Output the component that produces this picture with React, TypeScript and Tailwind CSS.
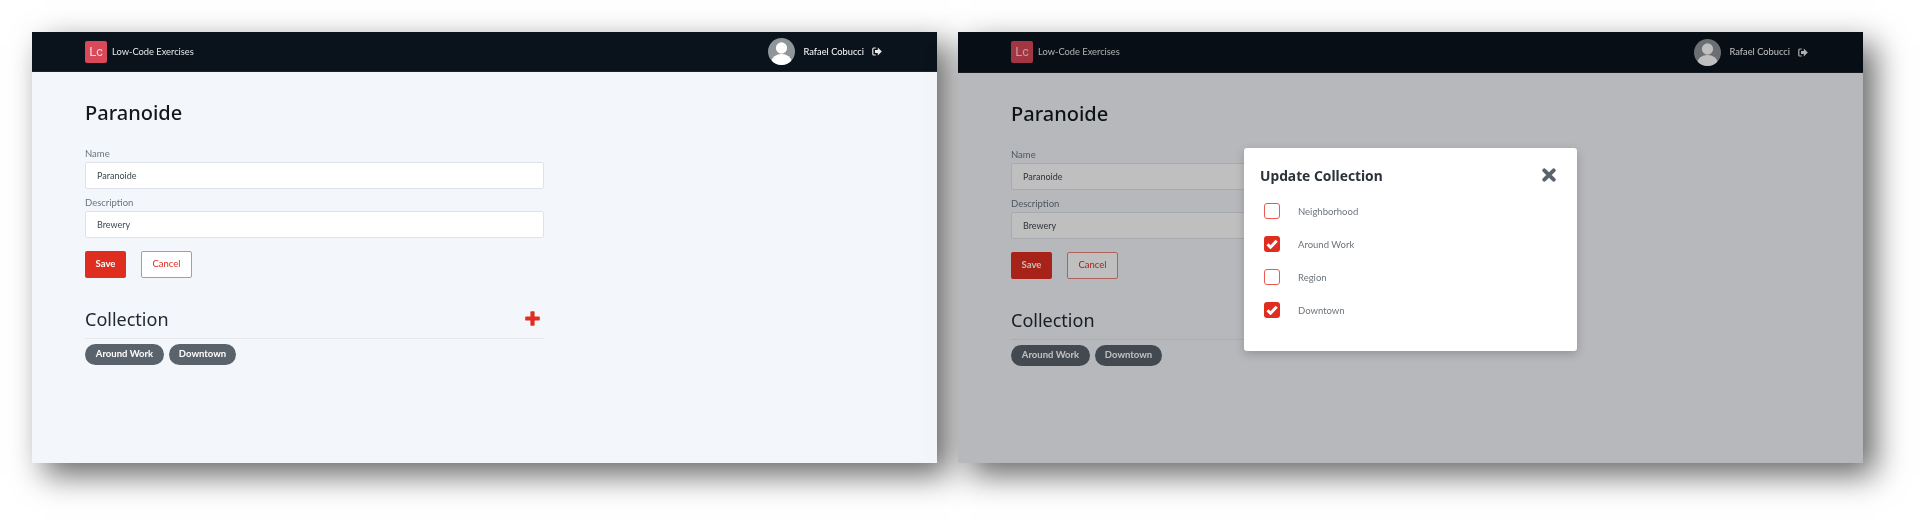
const sans = "font-['Lato','Open_Sans',sans-serif]";
const head = "font-['Noto_Sans','Open_Sans',sans-serif]";

function Avatar() {
  return (
    <svg viewBox="0 0 27 27" className="h-[27px] w-[27px] shrink-0">
      <circle cx="13.5" cy="13.5" r="13.5" fill="#8e959b" />
      <clipPath id="av"><circle cx="13.5" cy="13.5" r="13.5" /></clipPath>
      <g clipPath="url(#av)" fill="#fff">
        <ellipse cx="13.5" cy="10" rx="5.6" ry="5.8" />
        <ellipse cx="13.5" cy="23.5" rx="10" ry="7.5" />
      </g>
    </svg>
  );
}

function SignOut() {
  return (
    <svg viewBox="0 0 10 9" className="ml-[8px] h-[9px] w-[10px] shrink-0">
      <path d="M3.8 1H1.7C1.2 1 .8 1.4.8 1.9v5.2c0 .5.4.9.9.9h2.1" fill="none" stroke="#e8eaec" strokeWidth="1.2" />
      <path d="M5.8.6 9.8 4.5 5.8 8.4V6H3V3h2.8z" fill="#e8eaec" />
    </svg>
  );
}

function Plus() {
  return (
    <svg viewBox="0 0 15 15" className="mr-[4px] mt-[4px] h-[15px] w-[15px]">
      <path d="M5.4 1.200C5.400.6 5.800.2 6.400.2h2.200c.6 0 1 .4 1 1v4.200h4.200c.6 0 1 .4 1 1v2.200c0 .6-.4 1-1 1H9.600v4.200c0 .6-.4 1-1 1H6.400c-.6 0-1-.4-1-1V9.600H1.200c-.6 0-1-.4-1-1V6.400c0-.6.4-1 1-1h4.200z" fill="#df2e20" />
    </svg>
  );
}

function Close() {
  return (
    <svg viewBox="0 0 14 14" className="mb-[2px] h-[14px] w-[14px]">
      <path d="M2.300 2.300 11.700 11.700M11.700 2.300 2.300 11.700" stroke="#5a626c" strokeWidth="3.900" strokeLinecap="round" fill="none" />
    </svg>
  );
}

function Check() {
  return (
    <svg viewBox="0 0 12 10" className="h-[10px] w-[12px]">
      <path d="M1.500 5.200 4.500 8.200 10.700 1.800" stroke="#fff" strokeWidth="3" fill="none" />
    </svg>
  );
}

function Screen({ second }: { second: boolean }) {
  return (
    <section className={`relative h-[431px] w-[905px] shrink-0 bg-[#f3f6fa] shadow-[12px_12px_30px_rgba(0,0,0,0.6)] ${sans}`}>
      <header className={`border-b border-[#1d2630] bg-[#0a131c] ${second ? "h-[41px]" : "h-[40px]"}`}>
        <div className="flex h-full items-center justify-between pl-[53px] pr-[55px] blur-[0.3px]">
          <div className="flex items-center">
            <div className="flex h-[22px] w-[22px] items-center justify-center rounded-[2px] bg-[#d9495a] font-['Liberation_Sans',sans-serif] text-[13px] text-[#f3d6da]">Lc</div>
            <span className="ml-[5px] text-[9.300px] text-[#e6e8ea]">Low-Code Exercises</span>
          </div>
          <div className="flex items-center">
            <Avatar />
            <span className="ml-[9px] whitespace-nowrap text-[9.300px] text-white">Rafael Cobucci</span>
            <SignOut />
          </div>
        </div>
      </header>

      <div className="pl-[53px] pt-[27px] blur-[0.3px]">
        <div className="w-[459px]">
          <h1 className={`${head} h-[28px] text-[20px] font-medium leading-[28px] text-[#14181d]`}>Paranoide</h1>
          <label className="mt-[20px] block h-[15px] text-[9.500px] leading-[14px] text-[#6a7480]">Name</label>
          <div className="flex h-[27px] items-center rounded-[2px] border border-[#dfe3e9] bg-white pl-[11px] text-[9px] text-[#3f4750]">Paranoide</div>
          <label className="mt-[7px] block h-[15px] text-[9.500px] leading-[14px] text-[#6a7480]">Description</label>
          <div className="flex h-[27px] items-center rounded-[2px] border border-[#dfe3e9] bg-white pl-[11px] text-[9px] text-[#3f4750]">Brewery</div>
          <div className="mt-[13px] flex gap-[15px]">
            <button className="h-[27px] w-[41px] rounded-[2px] bg-[#df2e20] text-[9.500px] font-bold text-white">Save</button>
            <button className="h-[27px] w-[51px] rounded-[2px] border border-[#e8837b] bg-white text-[9.500px] text-[#df2e20]">Cancel</button>
          </div>
          <div className="mt-[29px] flex h-[32px] items-start justify-between border-b border-[#e4e8ed]">
            <h2 className={`${head} text-[18px] leading-[25px] text-[#212830]`}>Collection</h2>
            <Plus />
          </div>
          <div className="mt-[5px] flex gap-[5px]">
            <span className="flex h-[21px] w-[79px] items-center justify-center rounded-full bg-[#5a626c] text-[9.500px] font-bold text-white">Around Work</span>
            <span className="flex h-[21px] w-[67px] items-center justify-center rounded-full bg-[#5a626c] text-[9.500px] font-bold text-white">Downtown</span>
          </div>
        </div>
      </div>

      {second && (
        <>
          <div className="absolute inset-0 bg-black/25" />
          <div className="absolute left-[286px] top-[116px] h-[203px] w-[333px] rounded-[3px] bg-white pl-[16px] pr-[21px] pt-[16px] shadow-[0_3px_10px_rgba(0,0,0,0.2)]">
            <div className="blur-[0.3px]">
              <div className="flex h-[24px] items-center justify-between">
                <h3 className={`${head} text-[13.800px] font-bold text-[#2b323a]`}>Update Collection</h3>
                <Close />
              </div>
              <ul className="mt-[15px] flex flex-col gap-[17px] pl-[4px]">
                {([["Neighborhood", false], ["Around Work", true], ["Region", false], ["Downtown", true]] as [string, boolean][]).map(([t, c]) => (
                  <li key={t} className="flex h-[16px] items-center">
                    <span className={`flex h-[16px] w-[16px] items-center justify-center rounded-[3px] ${c ? "bg-[#df2e20]" : "border-[1.500px] border-[#ea5a50] bg-white"}`}>
                      {c && <Check />}
                    </span>
                    <span className="ml-[18px] pt-[2px] text-[9.500px] text-[#6d747c]">{t}</span>
                  </li>
                ))}
              </ul>
            </div>
          </div>
        </>
      )}
    </section>
  );
}

export default function App() {
  return (
    <main className="flex h-[528px] w-[1928px] gap-[21px] overflow-hidden bg-white pl-[32px] pt-[32px]">
      <Screen second={false} />
      <Screen second={true} />
    </main>
  );
}
